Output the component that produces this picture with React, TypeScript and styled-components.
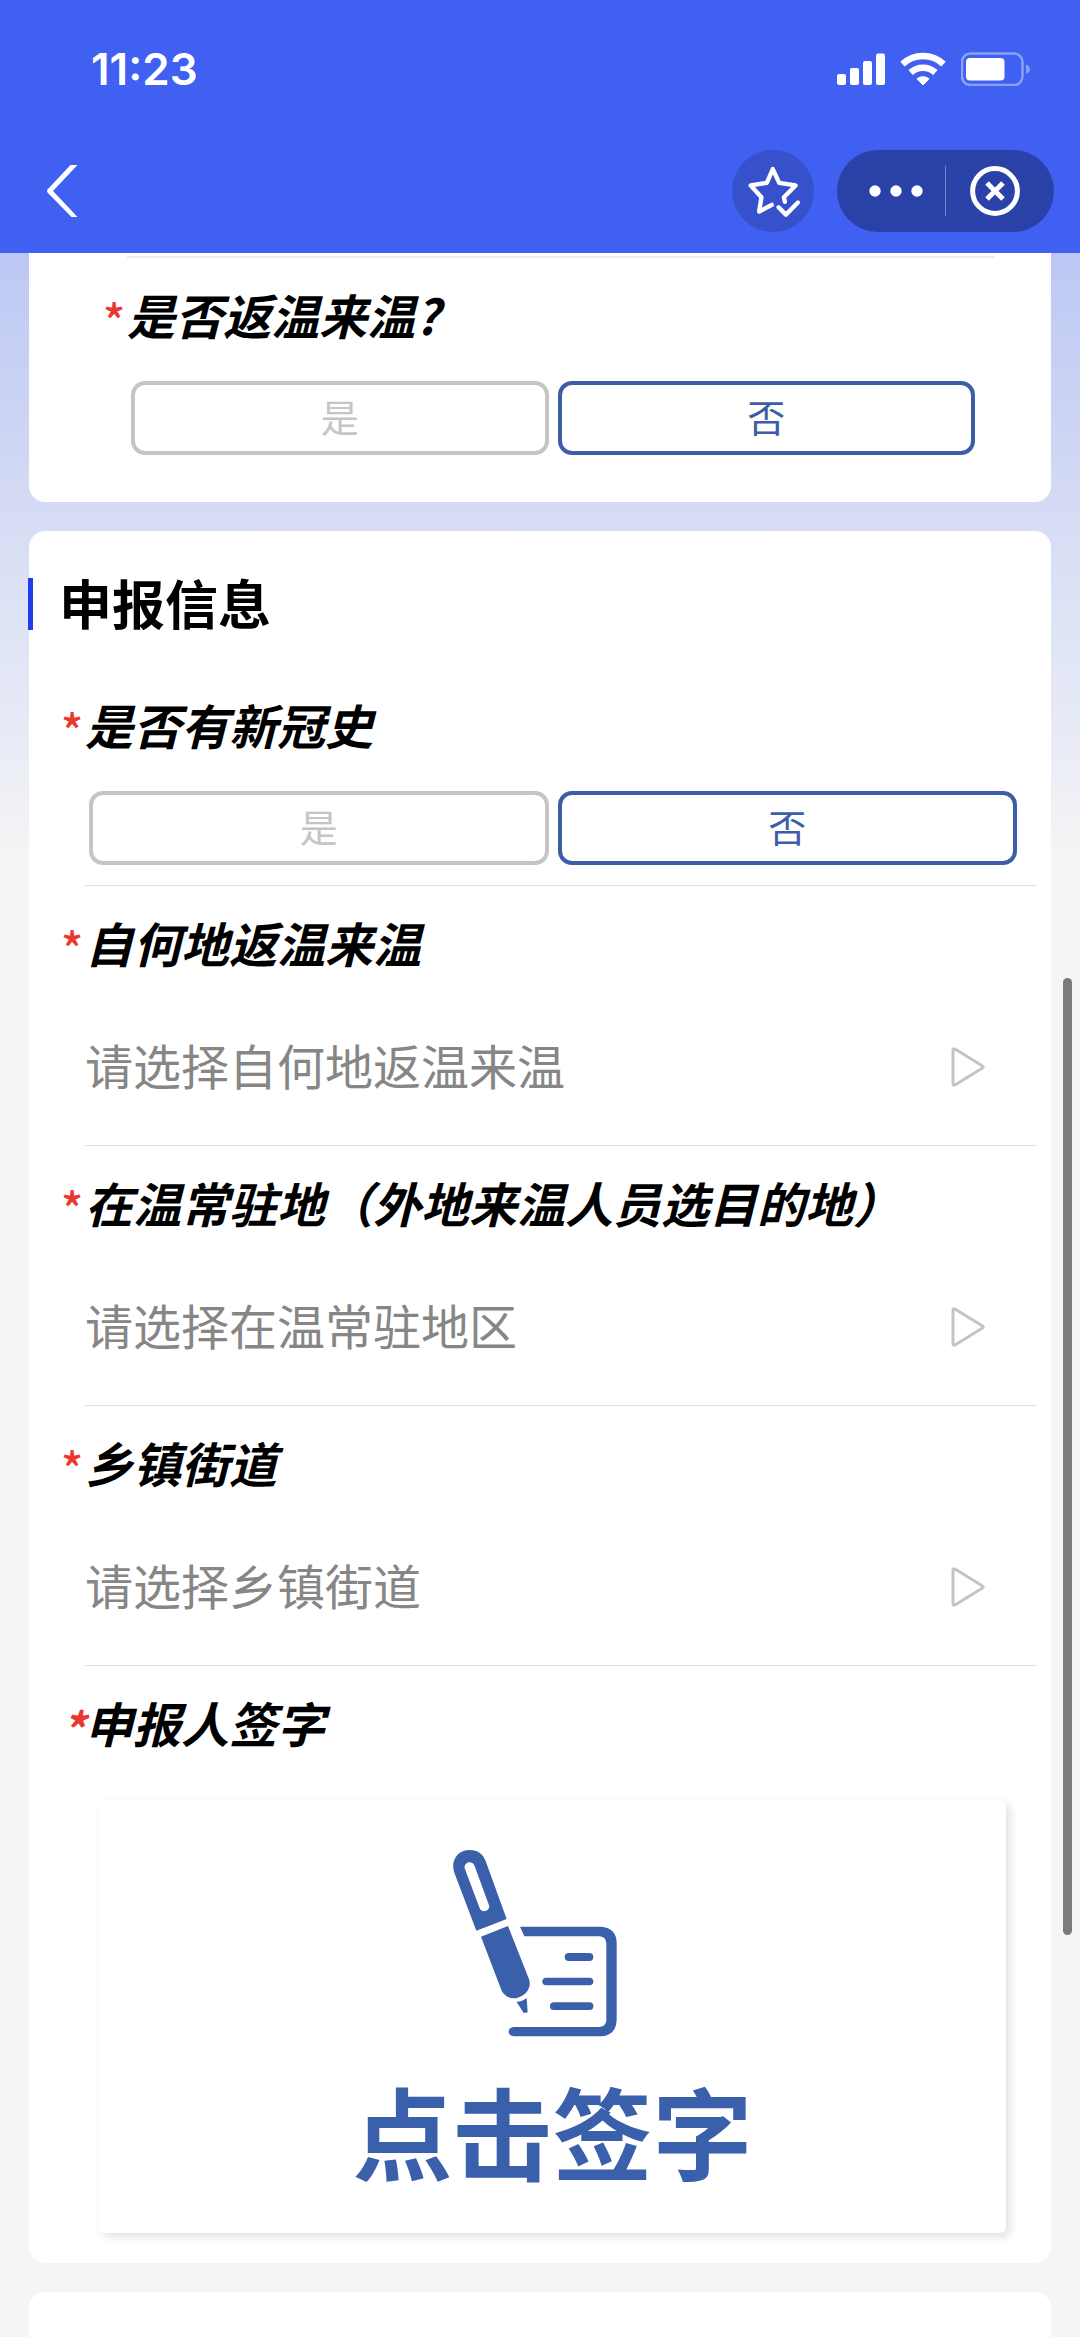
import React, { useId, useState } from "react";
import styled, { createGlobalStyle } from "styled-components";

const GlobalStyle = createGlobalStyle`
  *, *::before, *::after {
    box-sizing: border-box;
  }
  body {
    margin: 0;
    background: #f5f5f5;
    color: #000;
    font-family: "Noto Sans CJK SC", sans-serif;
  }
  button, select {
    margin: 0;
    padding: 0;
    border: 0;
    background: none;
    color: inherit;
    font: inherit;
    cursor: pointer;
  }
  svg {
    display: block;
    flex: none;
  }
`;

const Screen = styled.div`
  position: relative;
  display: flex;
  flex-direction: column;
  min-height: 100vh;
`;

const Header = styled.header`
  padding-bottom: 8px;
  background: #3f60f0;
  color: #fff;
`;

const StatusBar = styled.div`
  display: flex;
  align-items: center;
  justify-content: space-between;
  height: 137px;
  padding: 0 50px 0 91px;
`;

const Clock = styled.time`
  font-family: Inter, sans-serif;
  font-size: 44px;
  font-weight: 600;
  line-height: 52px;
`;

const StatusIcons = styled.div`
  display: flex;
  align-items: center;
  gap: 15px;
`;

const NavBar = styled.nav`
  display: flex;
  align-items: center;
  gap: 23px;
  height: 108px;
  padding: 0 26px 0 45px;
`;

const BackButton = styled.button`
  margin-right: auto;
`;

const FavoriteButton = styled.button`
  width: 82px;
  height: 82px;
  border-radius: 50%;
  background: #3651cb;
`;

const Capsule = styled.div`
  display: flex;
  align-items: center;
  height: 82px;
  padding: 0 10px;
  border-radius: 41px;
  background: #2a41a8;
`;

const CapsuleButton = styled.button`
  display: grid;
  place-items: center;
  width: 98px;
  height: 82px;
`;

const CapsuleDivider = styled.span`
  width: 1px;
  height: 50px;
  background: #7285cf;
`;

const Content = styled.main`
  display: flex;
  flex: 1;
  flex-direction: column;
  gap: 29px;
  padding: 0 29px;
  background: linear-gradient(#bdc7f4 0, #d6dcf4 265px, #e5e9f6 450px, #f5f5f5 610px);
`;

const Card = styled.section<{ $edge?: "top" | "bottom" }>`
  padding: 0 14px 0 56px;
  border-radius: ${(p) =>
    p.$edge === "top" ? "0 0 16px 16px" : p.$edge === "bottom" ? "16px 16px 0 0" : "16px"};
  background: #fff;
`;

const ReturnCard = styled(Card)`
  padding-top: 3px;
  padding-bottom: 27px;
`;

const ReportCard = styled(Card)`
  padding-top: 47px;
  padding-bottom: 30px;
`;

const NextCard = styled(Card)`
  flex: 1;
  min-height: 45px;
`;

const Inset = styled.div`
  margin: 0 42px;
  border-top: 2px solid #ebedeb;
`;

const SectionTitle = styled.h2`
  display: flex;
  align-items: center;
  height: 52px;
  margin: 0 0 38px -57px;
  padding: 0 0 4px 26px;
  border-left: 5px solid #1f3cf0;
  font-size: 53px;
  font-weight: 700;
  line-height: 48px;
`;

const Field = styled.div<{ $plain?: boolean }>`
  padding-top: 26px;
  border-bottom: ${(p) => (p.$plain ? "0" : "1px solid #dfdfdf")};
`;

const FieldLabel = styled.label`
  display: flex;
  height: 60px;
  margin-left: -24px;
  font-size: 48px;
  font-style: italic;
  font-weight: 700;
  line-height: 60px;
`;

const Star = styled.span<{ $slanted?: boolean }>`
  width: 24px;
  padding-top: 5px;
  color: #e8392f;
  font-size: 46px;
  font-style: ${(p) => (p.$slanted ? "italic" : "normal")};
  font-weight: ${(p) => (p.$slanted ? 700 : 500)};
`;

const Options = styled.div`
  display: grid;
  grid-template-columns: 1fr 1fr;
  gap: 9px;
  padding: 37px 20px 20px 4px;
`;

const Option = styled.label<{ $active: boolean }>`
  display: flex;
  align-items: center;
  justify-content: center;
  height: 74px;
  padding-bottom: 4px;
  border: 4px solid ${(p) => (p.$active ? "#3d5da6" : "#c5c5c5")};
  border-radius: 14px;
  color: ${(p) => (p.$active ? "#3d5da6" : "#c5c5c5")};
  font-size: 38px;
  line-height: 52px;
  cursor: pointer;
`;

const HiddenRadio = styled.input`
  width: 0;
  height: 0;
  margin: 0;
  appearance: none;
`;

const PickerRow = styled.div`
  display: flex;
  align-items: center;
  height: 156px;
  margin-top: 17px;
  padding-right: 52px;
`;

const Picker = styled.select`
  flex: 1;
  min-width: 0;
  height: 100%;
  padding-bottom: 6px;
  appearance: none;
  color: #868686;
  font-size: 48px;
`;

const SignButton = styled.button`
  display: flex;
  flex-direction: column;
  align-items: center;
  gap: 43px;
  width: calc(100% - 45px);
  margin: 48px 31px 0 14px;
  padding: 50px 0 53px;
  border-radius: 6px;
  background: #fff;
  box-shadow: 4px 4px 10px rgba(0, 0, 0, 0.12);
  color: #3a5fab;
  font-size: 100px;
  font-weight: 700;
  line-height: 100px;
`;

const ScrollThumb = styled.div`
  position: absolute;
  top: 978px;
  right: 8px;
  width: 9px;
  height: 957px;
  border-radius: 5px;
  background: #7b7b7b;
`;

function SignalIcon() {
  return (
    <svg width="48" height="34" viewBox="0 0 48 34" fill="#fff" aria-hidden="true">
      <rect x="0" y="22" width="9" height="11" rx="2" />
      <rect x="13" y="16" width="9" height="17" rx="2" />
      <rect x="26" y="9" width="9" height="24" rx="2" />
      <rect x="39" y="1.5" width="9" height="31.5" rx="2" />
    </svg>
  );
}

function WifiIcon() {
  return (
    <svg width="46" height="34" viewBox="0 0 46 34" aria-hidden="true">
      <g fill="none" stroke="#fff" strokeWidth="6.5">
        <path d="M2.5 12.2 A30 30 0 0 1 43.5 12.2" />
        <path d="M10.6 20.5 A18.5 18.5 0 0 1 35.4 20.5" />
      </g>
      <path
        d="M17 26.8 A9.5 9.5 0 0 1 29 26.8 L23.6 32.4 Q23 33 22.4 32.4 Z"
        fill="#fff"
        stroke="#fff"
        strokeLinejoin="round"
      />
    </svg>
  );
}

function BatteryIcon() {
  return (
    <svg width="69" height="34" viewBox="0 0 69 34" aria-hidden="true">
      <rect x="1" y="1.5" width="60.5" height="31.5" rx="8.5" fill="none" stroke="#8a9ff6" strokeWidth="2.5" />
      <rect x="5" y="6" width="38.5" height="22.5" rx="4" fill="#fff" />
      <path d="M65 12.5 Q69 14 69 17.3 Q69 20.5 65 22 Z" fill="#8a9ff6" />
    </svg>
  );
}

function BackIcon() {
  return (
    <svg width="34" height="54" viewBox="0 0 34 54" aria-hidden="true">
      <path d="M25.5 1 H32.5 L8 27 L32.5 53 H26.5 L2.5 28.5 Q1.5 27 2.5 25.5 Z" fill="#fff" />
    </svg>
  );
}

function FavoriteIcon() {
  return (
    <svg
      width="82"
      height="82"
      viewBox="96 450 245 245"
      fill="none"
      stroke="#fff"
      strokeWidth="13"
      strokeLinecap="round"
      strokeLinejoin="round"
      aria-hidden="true"
    >
      <path d="M215 614 L177 634 L184 591 L152 556 L200 548 L218 507 L237 548 L286 556 L251 591 L254 605" />
      <path d="M235 621 L257 643 L293 607" />
    </svg>
  );
}

function MoreIcon() {
  return (
    <svg width="54" height="12" viewBox="0 0 54 12" fill="#fff" aria-hidden="true">
      <circle cx="6" cy="6" r="5.7" />
      <circle cx="27" cy="6" r="5.7" />
      <circle cx="48" cy="6" r="5.7" />
    </svg>
  );
}

function CloseIcon() {
  return (
    <svg width="50" height="50" viewBox="0 0 50 50" fill="none" stroke="#fff" strokeWidth="5" aria-hidden="true">
      <circle cx="25" cy="25" r="22.4" />
      <path d="M17 17 L33 33 M33 17 L17 33" />
    </svg>
  );
}

function ArrowIcon() {
  return (
    <svg
      width="34"
      height="40"
      viewBox="0 0 34 40"
      fill="none"
      stroke="#c4c4c4"
      strokeWidth="3"
      strokeLinejoin="round"
      aria-hidden="true"
    >
      <path d="M2 3 Q2 1 4 2 L31.5 19 Q33 20 31.5 21 L4 38 Q2 39 2 37 Z" />
    </svg>
  );
}

function SignIcon() {
  return (
    <svg width="200" height="187" viewBox="306 150 600 561" aria-hidden="true">
      <g fill="#3a5fab">
        <path
          fillRule="evenodd"
          d="M376 392 L310 218 C298 184 318 150 356 150 C382 150 398 164 405 186 L467 357 Z
             M341 205 L386 325 C392 340 419 334 414 316 L370 196 C362 178 337 188 341 205 Z"
        />
        <path d="M390 410 L471 378 L535 540 C540 560 530 578 512 588 C488 602 464 594 452 572 Z" />
        <path d="M497 606 Q515 604 527 595 L530 637 L518 639 Z" />
        <path d="M507 380 H750 Q797 384 797 430 V660 Q795 706 750 709 H488 Q473 706 473 695 Q473 683 488 681 H746 Q765 679 766 660 V430 Q765 411 746 409 H520 Z" />
        <rect x="641" y="459" width="86" height="24" rx="12" />
        <rect x="574" y="533" width="153" height="23" rx="11.5" />
        <rect x="597" y="607" width="130" height="23" rx="11.5" />
      </g>
    </svg>
  );
}

function ChoiceField({ label, plain }: { label: string; plain?: boolean }) {
  const id = useId();
  const [value, setValue] = useState("否");
  return (
    <Field $plain={plain}>
      <FieldLabel as="div" id={id}>
        <Star>*</Star>
        {label}
      </FieldLabel>
      <Options role="radiogroup" aria-labelledby={id}>
        {["是", "否"].map((choice) => (
          <Option key={choice} $active={value === choice}>
            <HiddenRadio
              type="radio"
              name={id}
              checked={value === choice}
              onChange={() => setValue(choice)}
            />
            {choice}
          </Option>
        ))}
      </Options>
    </Field>
  );
}

function PickerField({ label, placeholder }: { label: string; placeholder: string }) {
  const id = useId();
  return (
    <Field>
      <FieldLabel htmlFor={id}>
        <Star>*</Star>
        {label}
      </FieldLabel>
      <PickerRow>
        <Picker id={id} defaultValue="">
          <option value="">{placeholder}</option>
        </Picker>
        <ArrowIcon />
      </PickerRow>
    </Field>
  );
}

export default function App() {
  return (
    <Screen>
      <GlobalStyle />
      <Header>
        <StatusBar>
          <Clock>11:23</Clock>
          <StatusIcons>
            <SignalIcon />
            <WifiIcon />
            <BatteryIcon />
          </StatusIcons>
        </StatusBar>
        <NavBar>
          <BackButton aria-label="返回">
            <BackIcon />
          </BackButton>
          <FavoriteButton aria-label="收藏">
            <FavoriteIcon />
          </FavoriteButton>
          <Capsule>
            <CapsuleButton aria-label="更多">
              <MoreIcon />
            </CapsuleButton>
            <CapsuleDivider />
            <CapsuleButton aria-label="关闭">
              <CloseIcon />
            </CapsuleButton>
          </Capsule>
        </NavBar>
      </Header>
      <Content>
        <ReturnCard $edge="top">
          <Inset>
            <ChoiceField label="是否返温来温?" plain />
          </Inset>
        </ReturnCard>
        <ReportCard>
          <SectionTitle>申报信息</SectionTitle>
          <ChoiceField label="是否有新冠史" />
          <PickerField label="自何地返温来温" placeholder="请选择自何地返温来温" />
          <PickerField label="在温常驻地（外地来温人员选目的地）" placeholder="请选择在温常驻地区" />
          <PickerField label="乡镇街道" placeholder="请选择乡镇街道" />
          <Field $plain>
            <FieldLabel as="div" id="sign-label">
              <Star $slanted>*</Star>
              申报人签字
            </FieldLabel>
            <SignButton type="button" aria-describedby="sign-label">
              <SignIcon />
              点击签字
            </SignButton>
          </Field>
        </ReportCard>
        <NextCard $edge="bottom" />
      </Content>
      <ScrollThumb />
    </Screen>
  );
}
